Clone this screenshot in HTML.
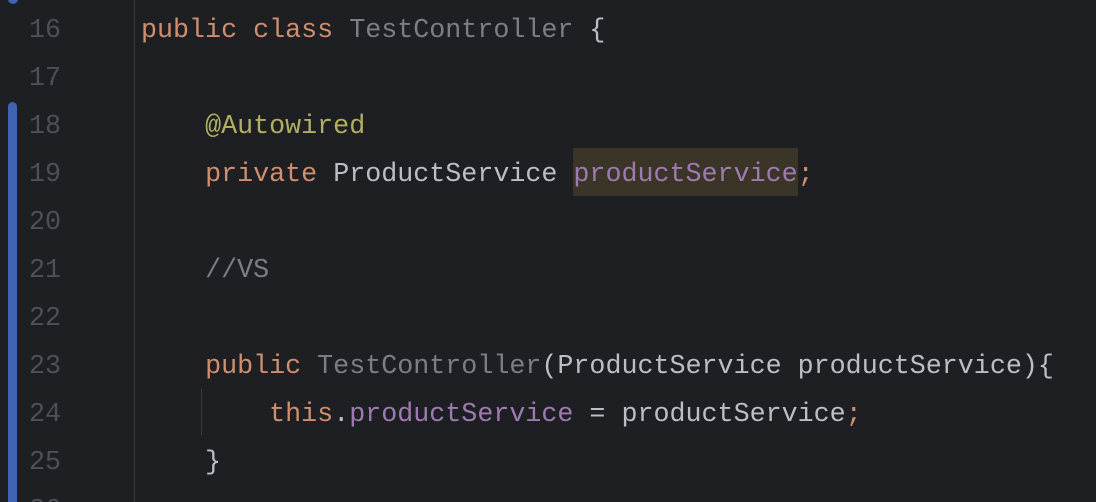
<!DOCTYPE html><html><head><style>
html,body{margin:0;width:1096px;height:502px;overflow:hidden}
body{background:#1e1f22;position:relative;font-family:"Liberation Mono",monospace;font-size:26.7px}
.bar{position:absolute;left:8px;top:102px;width:9px;height:400px;background:#4063b3;border-radius:5px 5px 0 0}
.sep{position:absolute;left:134px;top:0;width:1px;height:502px;background:#393b40}
.ln{position:absolute;left:0;width:61px;text-align:right;color:#4b5059;line-height:48px;height:48px}
.c{position:absolute;left:141px;white-space:pre;line-height:48px;height:48px;color:#bcbec4}
.k{color:#cf8e6d}.a{color:#b3ae60}.f{color:#9d7bb0}.g{color:#7a7e85}
.hl{background:#3b3527;display:inline-block;line-height:48px}
</style></head><body>
<div style="position:absolute;left:8px;top:-8px;width:10px;height:12px;background:#4063b3;border-radius:5px"></div>
<div class="bar"></div><div class="sep"></div>
<div style="position:absolute;left:201px;top:389px;width:1px;height:46px;background:#393b40"></div>
<div class="ln" style="top:7px">16</div><div class="ln" style="top:55px">17</div><div class="ln" style="top:103px">18</div><div class="ln" style="top:151px">19</div><div class="ln" style="top:199px">20</div><div class="ln" style="top:247px">21</div><div class="ln" style="top:295px">22</div><div class="ln" style="top:343px">23</div><div class="ln" style="top:391px">24</div><div class="ln" style="top:439px">25</div><div class="ln" style="top:487px;height:15px;overflow:hidden">26</div>
<div class="c" style="top:7px"><span class="k">public class </span><span class="g">TestController</span> {</div>
<div class="c" style="top:103px">    <span class="a">@Autowired</span></div>
<div class="c" style="top:148px;line-height:48px">    <span class="k" style="position:relative;top:3px">private </span><span style="position:relative;top:3px">ProductService </span><span class="hl f"><span style="position:relative;top:3px">productService</span></span><span class="k" style="position:relative;top:3px">;</span></div>
<div class="c" style="top:247px">    <span class="g">//VS</span></div>
<div class="c" style="top:343px">    <span class="k">public </span><span class="g">TestController</span>(ProductService productService){</div>
<div class="c" style="top:391px">        <span class="k">this</span>.<span class="f">productService</span> = productService<span class="k">;</span></div>
<div class="c" style="top:439px">    }</div>
</body></html>
